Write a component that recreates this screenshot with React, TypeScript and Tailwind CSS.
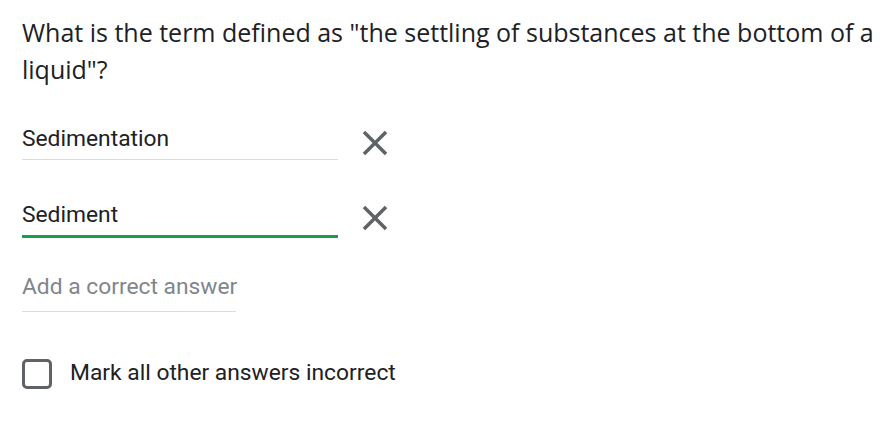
import React from "react";

function XIcon() {
  return (
    <svg width="42" height="42" viewBox="0 0 24 24" className="shrink-0">
      <path d="M19 6.41 17.59 5 12 10.59 6.41 5 5 6.41 10.59 12 5 17.59 6.41 19 12 13.41 17.59 19 19 17.59 13.41 12z" fill="#5f6368" />
    </svg>
  );
}

export default function App() {
  return (
    <div className="w-[894px] h-[422px] bg-white pl-[22px] pt-[14px]" style={{ fontFamily: "Roboto, 'Liberation Sans', sans-serif" }}>
      <div className="text-[25px] leading-[37px] text-[#202124] h-[74px]" style={{ fontFamily: "'Open Sans', Roboto, sans-serif" }}>
        What is the term defined as "the settling of substances at the bottom of a liquid"?
      </div>
      <div className="mt-[36px] flex items-start h-[36px]">
        <div className="w-[316px] border-b border-[#dadce0] h-[36px] text-[22.8px] text-[#202124] leading-[30px] whitespace-nowrap">Sedimentation</div>
        <div className="ml-[16px] -mt-[2px] h-[42px] shrink-0"><XIcon /></div>
      </div>
      <div className="mt-[40px] flex items-start h-[38px]">
        <div className="w-[316px] border-b-[3px] border-[#14a04a] h-[38px] text-[22.8px] text-[#202124] leading-[30px] whitespace-nowrap">Sediment</div>
        <div className="ml-[16px] -mt-[3px] h-[42px] shrink-0"><XIcon /></div>
      </div>
      <div className="mt-[34px] w-[214px] border-b border-[#dadce0] h-[40px] text-[22.8px] text-[#80868b] leading-[30px] whitespace-nowrap">Add a correct answer</div>
      <div className="mt-[47px] flex items-center">
        <div className="w-[30px] h-[30px] border-[3px] border-[#5f6368] rounded-[5px] shrink-0" />
        <div className="ml-[18px] text-[22.8px] leading-[30px] text-[#202124] -mt-[3px] whitespace-nowrap">Mark all other answers incorrect</div>
      </div>
    </div>
  );
}
